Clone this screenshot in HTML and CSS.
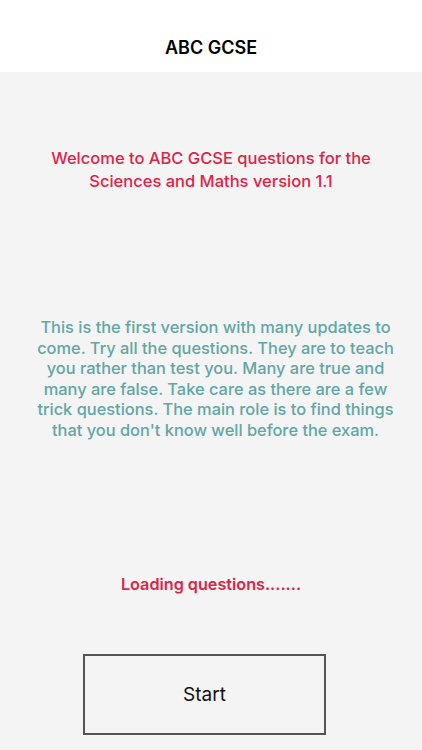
FILE: index.html
```html
<!DOCTYPE html>
<html>
<head>
<meta charset="utf-8">
<link rel="stylesheet" href="styles.css">
</head>
<body>
<header class="navbar"><h1 class="title">ABC GCSE</h1></header>
<main class="content">
  <p class="welcome">Welcome to ABC GCSE questions for the Sciences and Maths version 1.1</p>
  <p class="intro">This is the first version with many updates to come. Try all the questions. They are to teach you rather than test you. Many are true and many are false. Take care as there are a few trick questions. The main role is to find things that you don't know well before the exam.</p>
  <p class="loading">Loading questions.......</p>
  <button class="start">Start</button>
</main>
</body>
</html>
```
FILE: styles.css
```css
html, body { margin: 0; padding: 0; }
body {
  width: 422px;
  height: 750px;
  background: #f4f4f4;
  font-family: Inter, "Noto Sans", sans-serif;
  overflow: hidden;
}
.navbar {
  height: 72px;
  background: #ffffff;
  display: flex;
  align-items: flex-end;
  justify-content: center;
  box-sizing: border-box;
  padding-bottom: 14px;
}
.title {
  margin: 0;
  font-size: 18px;
  font-weight: 600;
  color: #000;
}
.content {
  display: flex;
  flex-direction: column;
  align-items: center;
}
.welcome {
  margin: 75px 0 0;
  width: 360px;
  text-align: center;
  color: #dc2449;
  font-size: 16.5px;
  font-weight: 500;
  line-height: 23px;
}
.intro {
  margin: 124px 0 0 9px;
  width: 376px;
  text-align: center;
  color: #62a6a6;
  font-size: 16.4px;
  font-weight: 500;
  line-height: 20.6px;
}
.loading {
  margin: 133px 0 0;
  color: #dc2449;
  font-size: 16.2px;
  font-weight: 600;
  line-height: 20px;
}
.start {
  margin-top: 60px;
  margin-left: -13px;
  width: 243px;
  height: 81px;
  border: 2px solid #555;
  background: transparent;
  font-family: inherit;
  font-size: 19px;
  font-weight: 400;
  color: #111;
}
```
